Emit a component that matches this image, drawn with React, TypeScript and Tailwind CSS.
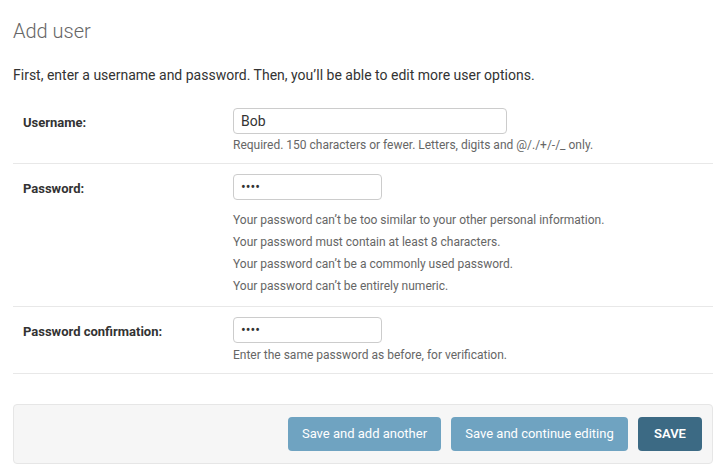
const helpCls = "text-[12px] leading-[16px] text-[#666]";

function Row({
  label,
  value,
  inputWidth,
  children,
}: {
  label: string;
  value: string;
  inputWidth: string;
  children: React.ReactNode;
}) {
  return (
    <div className="flex border-b border-[#e8e8e8] px-[10px] py-[10px]">
      <label className="w-[210px] shrink-0 pt-[6px] text-[13px] leading-[18px] font-bold text-[#333]">
        {label}
      </label>
      <div className="flex flex-col">
        <div
          className={`${inputWidth} flex h-[26px] items-center rounded-[4px] border border-[#ccc] bg-white px-[7px] text-[14px] text-[#333]`}
        >
          {value}
        </div>
        {children}
      </div>
    </div>
  );
}

export default function App() {
  return (
    <div className="min-h-[465px] bg-white pr-[5px] pl-[13px] font-['Roboto',sans-serif] text-[#333]">
      <h1 className="pt-[19px] text-[20px] leading-[24px] font-light text-[#666]">Add user</h1>
      <p className="mt-[22px] text-[14px] leading-[20px]">
        First, enter a username and password. Then, you’ll be able to edit more user options.
      </p>

      <div className="mt-[13px]">
        <Row label="Username:" value="Bob" inputWidth="w-[274px]">
          <p className={`${helpCls} mt-[3px]`}>
            Required. 150 characters or fewer. Letters, digits and @/./+/-/_ only.
          </p>
        </Row>
        <Row label="Password:" value="••••" inputWidth="w-[149px]">
          <ul className={`${helpCls} mt-[12px] mb-[2px] flex flex-col gap-[6px]`}>
            <li>Your password can’t be too similar to your other personal information.</li>
            <li>Your password must contain at least 8 characters.</li>
            <li>Your password can’t be a commonly used password.</li>
            <li>Your password can’t be entirely numeric.</li>
          </ul>
        </Row>
        <Row label="Password confirmation:" value="••••" inputWidth="w-[149px]">
          <p className={`${helpCls} mt-[4px]`}>Enter the same password as before, for verification.</p>
        </Row>
      </div>

      <div className="mt-[30px] flex justify-end gap-[10px] rounded-[4px] border border-[#e6e6e6] bg-[#f6f6f6] py-[12px] pr-[10px]">
        <button className="h-[34px] w-[153px] rounded-[4px] bg-[#6fa3c1] text-[13px] text-white">
          Save and add another
        </button>
        <button className="h-[34px] w-[177px] rounded-[4px] bg-[#6fa3c1] text-[13px] text-white">
          Save and continue editing
        </button>
        <button className="h-[34px] w-[64px] rounded-[4px] bg-[#3c6a84] text-[13px] font-semibold text-white">
          SAVE
        </button>
      </div>
    </div>
  );
}
